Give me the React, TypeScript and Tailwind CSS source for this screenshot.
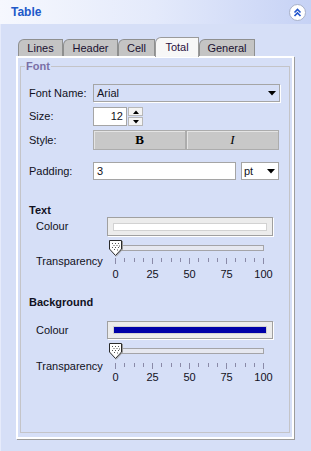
import React from 'react';

const ticks = Array.from({ length: 17 }, (_, i) => i);
const labels = ['0', '25', '50', '75', '100'];

function Tab({ label, width, active = false }: { label: string; width: string; active?: boolean }) {
  if (active) {
    return (
      <div className={`${width} h-[20px] -mb-[1px] relative z-10 flex items-center justify-center bg-[#f7f7f7] border border-b-0 border-[#9a9a9a] rounded-tl-[6px] text-[#2a1040]`}>
        {label}
      </div>
    );
  }
  return (
    <div className={`${width} h-[17px] flex items-center justify-center bg-[#c4c4c4] border border-b-0 border-[#8e8f8f] rounded-tl-[6px] text-[#1a1030]`}>
      {label}
    </div>
  );
}

function DownArrow() {
  return (
    <svg width="8" height="5" viewBox="0 0 8 5">
      <polygon points="0,0 8,0 4,4.5" fill="#000" />
    </svg>
  );
}

function Thumb() {
  return (
    <svg width="14" height="17" viewBox="0 0 14 17">
      <polygon points="0.5,0.5 12.5,0.5 12.5,9 6.5,15.5 0.5,9" fill="#fff" stroke="#2a2a2a" />
      <polyline points="13.5,1 13.5,9.5 7,16.5" fill="none" stroke="#9a9a9a" />
      {[
        [3, 3], [6, 3], [9, 3],
        [4.5, 5], [7.5, 5], [10, 5.5],
        [3, 7], [6, 7], [9, 7],
        [5, 9], [8, 9.5],
      ].map(([x, y], i) => (
        <rect key={i} x={x} y={y} width="1" height="1" fill="#555" />
      ))}
    </svg>
  );
}

function Slider() {
  return (
    <div className="relative ml-[80px] h-[16px] w-[156px]">
      <div className="absolute left-[11px] top-[5px] w-[144px] h-[6px] border border-[#a4a4a8] bg-[#e6e8f0]" />
      <div className="absolute left-0 top-0">
        <Thumb />
      </div>
    </div>
  );
}

function TransparencyScale({ rowGap, labelGap }: { rowGap: string; labelGap: string }) {
  return (
    <>
      <div className={`${rowGap} flex items-center h-[6px]`}>
        <span className="ml-[7px] w-[79px] leading-[13px] whitespace-nowrap">Transparency</span>
        <div className="w-[149px] h-[6px] flex justify-between items-start">
          {ticks.map((t) => (
            <div key={t} className={`w-px bg-[#8a8aa8] ${t % 4 === 0 ? 'h-[6px]' : 'h-[4px]'}`} />
          ))}
        </div>
      </div>
      <div className={`${labelGap} ml-[86px] w-[149px] flex justify-between leading-[13px]`}>
        {labels.map((l) => (
          <div key={l} className="w-px flex justify-center">
            <span className="whitespace-nowrap">{l}</span>
          </div>
        ))}
      </div>
    </>
  );
}

function ColourRow({ fill, height }: { fill: string; height: string }) {
  return (
    <div className={`flex items-center ${height}`}>
      <span className="pl-[7px] w-[78px]">Colour</span>
      <div className="w-[166px] h-full border border-[#a0a0a0] bg-[#ececec] flex items-center px-[5px] shadow-[1px_1px_0_#fff]">
        <div className={`w-full h-[8px] border border-[#d2d2d2] ${fill}`} />
      </div>
    </div>
  );
}

export default function App() {
  return (
    <div className="w-[311px] h-[451px] bg-[#d6dff7] flex flex-col font-['Liberation_Sans',Arial,sans-serif] text-[11px] text-[#111122] overflow-hidden">
      {/* Panel header */}
      <div className="h-[24px] shrink-0 flex items-center justify-between pl-[11px] pr-[5px] bg-gradient-to-r from-[#f6f8fe] via-[#e4eafb] to-[#c6d2f5]">
        <span className="text-[12px] font-bold text-[#2159c9]">Table</span>
        <div className="w-[17px] h-[17px] rounded-full bg-white border border-[#a7b0c8] flex items-center justify-center">
          <svg width="9" height="9" viewBox="0 0 9 9">
            <polyline points="1.5,4.5 4.5,1.5 7.5,4.5" fill="none" stroke="#2255cc" strokeWidth="1.6" />
            <polyline points="1.5,8 4.5,5 7.5,8" fill="none" stroke="#2255cc" strokeWidth="1.6" />
          </svg>
        </div>
      </div>

      <div className="flex-1 border-l border-[#e6ebfb] pl-[15px] pt-[13px]">
        {/* Tabs */}
        <div className="flex items-end h-[19px] pl-[2px]">
          <Tab label="Lines" width="w-[45px]" />
          <Tab label="Header" width="w-[55px]" />
          <Tab label="Cell" width="w-[37px]" />
          <Tab label="Total" width="w-[44px]" active />
          <Tab label="General" width="w-[56px]" />
        </div>

        {/* Tab panel */}
        <div className="w-[278px] h-[383px] border-2 border-white shadow-[1px_1px_0_#9c9c9c] px-[2px] pt-[8px] pb-[4px]">
          <div className="relative h-full border border-[#c4c4c8] pl-[8px] pt-[17px]">
            <span className="absolute -top-[7px] left-[4px] px-[1px] bg-[#d6dff7] leading-[13px] font-bold text-[#7a6fa6]">Font</span>

            <div className="flex items-center h-[18px]">
              <span className="w-[64px]">Font Name:</span>
              <div className="w-[187px] h-full border border-[#a5a5a5] shadow-[1px_1px_0_#fff] flex items-center justify-between pl-[3px] pr-[3px]">
                <span>Arial</span>
                <DownArrow />
              </div>
            </div>

            <div className="mt-[5px] flex items-center h-[19px]">
              <span className="w-[64px]">Size:</span>
              <div className="w-[34px] h-full bg-white border border-[#a5a5a5] flex items-center justify-end pr-[3px]">12</div>
              <div className="w-[16px] h-full flex flex-col gap-px pl-px">
                <div className="flex-1 bg-[#f4f4f4] border border-[#b8b8b8] flex items-center justify-center">
                  <svg width="6" height="4" viewBox="0 0 6 4"><polygon points="0,4 6,4 3,0.5" fill="#000" /></svg>
                </div>
                <div className="flex-1 bg-[#f4f4f4] border border-[#b8b8b8] flex items-center justify-center">
                  <svg width="6" height="4" viewBox="0 0 6 4"><polygon points="0,0 6,0 3,3.5" fill="#000" /></svg>
                </div>
              </div>
            </div>

            <div className="mt-[4px] flex items-center h-[20px]">
              <span className="w-[64px]">Style:</span>
              <div className="w-[93px] h-full bg-[#c8c8c8] border border-[#acacac] shadow-[inset_1px_1px_0_#e4e4e4] flex items-center justify-center font-['Liberation_Serif',serif] font-bold text-[13px] text-black">B</div>
              <div className="w-[93px] h-full bg-[#c8c8c8] border border-[#acacac] shadow-[inset_1px_1px_0_#e4e4e4] flex items-center justify-center font-['Liberation_Serif',serif] italic text-[13px] text-black">I</div>
            </div>

            <div className="mt-[12px] flex items-center h-[18px]">
              <span className="w-[64px]">Padding:</span>
              <div className="w-[143px] h-full bg-white border border-[#a5a5a5] flex items-center pl-[3px]">3</div>
              <div className="ml-[5px] w-[38px] h-full bg-white border border-[#a5a5a5] flex items-center justify-between pl-[2px] pr-[3px]">
                <span>pt</span>
                <DownArrow />
              </div>
            </div>

            {/* Text section */}
            <div className="mt-[24px] leading-[13px] font-bold">Text</div>
            <ColourRow fill="bg-white" height="h-[19px]" />
            <div className="mt-[4px]">
              <Slider />
            </div>
            <TransparencyScale rowGap="mt-[2px]" labelGap="mt-[4px]" />

            {/* Background section */}
            <div className="mt-[15px] leading-[13px] font-bold">Background</div>
            <div className="mt-[12px]">
              <ColourRow fill="bg-[#0000a8]" height="h-[18px]" />
            </div>
            <div className="mt-[4px]">
              <Slider />
            </div>
            <TransparencyScale rowGap="mt-[4px]" labelGap="mt-[2px]" />
          </div>
        </div>
      </div>
    </div>
  );
}
